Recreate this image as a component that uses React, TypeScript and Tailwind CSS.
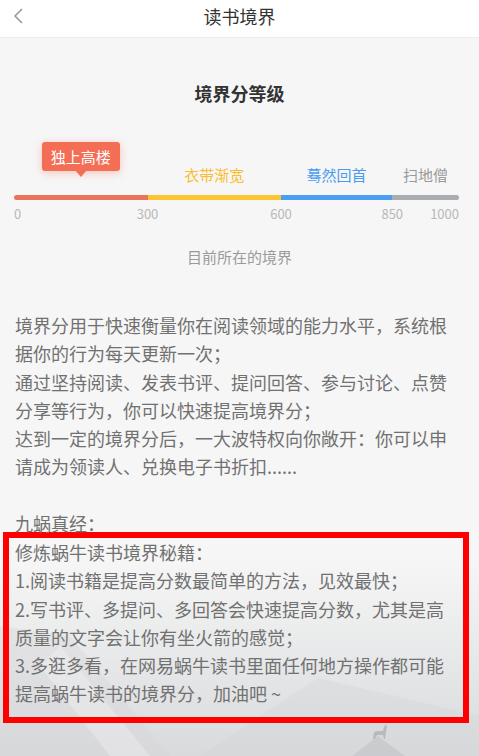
import React from "react";

const font = { fontFamily: '"Noto Sans CJK SC", "Noto Sans", sans-serif' };

export default function App() {
  return (
    <div
      className="relative h-[756px] w-[479px] overflow-hidden bg-[linear-gradient(to_bottom,#f6f6f6_0%,#f6f6f6_74%,#e6e7e8_88%,#d9dadc_100%)]"
      style={font}
    >
      {/* background mountains */}
      <svg
        className="absolute bottom-0 left-0"
        width="479"
        height="190"
        viewBox="0 0 479 190"
      >
        <polygon points="0,60 70,70 170,190 0,190" fill="#d4d5d8" opacity="0.35" />
        <polygon points="60,80 150,190 110,190 40,100" fill="#ffffff" opacity="0.25" />
        <polygon points="200,190 318,112 479,150 479,190" fill="#d2d3d6" opacity="0.35" />
        <polygon points="352,190 378,170 405,190" fill="#c7c8cb" opacity="0.8" />
        {/* goat */}
        <path
          d="M373,173 L374,166 L377,165 L383,165 L384,161 L386,158 L387,161 L386,166 L385,173 L384,173 L383,169 L377,169 L375,173 Z"
          fill="#b9babd"
        />
      </svg>

      <div className="relative">
        {/* header */}
        <div className="relative flex h-[38px] justify-center border-b border-[#ececec] bg-white pt-[5px]">
          <svg
            className="absolute left-[12px] top-[7px]"
            width="14"
            height="18"
            viewBox="0 0 14 18"
          >
            <polyline
              points="10,2 3,9 10,16"
              fill="none"
              stroke="#9a9a9a"
              strokeWidth="1.6"
            />
          </svg>
          <span className="text-[18px] leading-[22px] text-[#333]">读书境界</span>
        </div>

        {/* title */}
        <div className="mt-[43px] text-center text-[18px] font-bold leading-[24px] text-[#333]">
          境界分等级
        </div>

        {/* level bar */}
        <div className="mx-[14px] mt-[60px] w-[445px]">
          <div className="flex">
            <div className="relative flex flex-[300] flex-col">
              <div className="h-[20px]" />
              <div className="absolute left-1/2 top-[-23px] -translate-x-1/2">
                <div className="relative rounded-[3px] bg-[#f46d55] px-[9px] text-[15px] leading-[29px] whitespace-nowrap text-white shadow-[0_2px_8px_rgba(244,109,85,0.35)]">
                  独上高楼
                  <div className="absolute left-1/2 top-[28px] h-0 w-0 -translate-x-1/2 border-x-[6px] border-t-[7px] border-x-transparent border-t-[#f46d55]" />
                </div>
              </div>
              <div className="mt-[10px] h-[5px] rounded-l-full bg-[#e9745e]" />
            </div>
            <div className="flex flex-[300] flex-col">
              <div className="text-center text-[15px] leading-[20px] text-[#fbbd2f]">衣带渐宽</div>
              <div className="mt-[10px] h-[5px] bg-[#fdc535]" />
            </div>
            <div className="flex flex-[250] flex-col">
              <div className="text-center text-[15px] leading-[20px] text-[#4a9bf0]">蓦然回首</div>
              <div className="mt-[10px] h-[5px] bg-[#4c9ef2]" />
            </div>
            <div className="flex flex-[150] flex-col">
              <div className="text-center text-[15px] leading-[20px] whitespace-nowrap text-[#9a9a9a]">扫地僧</div>
              <div className="mt-[10px] h-[5px] rounded-r-full bg-[#a9acb0]" />
            </div>
          </div>
          <div className="relative mt-[6px] h-[16px] text-[13px] leading-[16px] text-[#b8b8b8]">
            <span className="absolute left-0">0</span>
            <span className="absolute left-[30%] -translate-x-1/2">300</span>
            <span className="absolute left-[60%] -translate-x-1/2">600</span>
            <span className="absolute left-[85%] -translate-x-1/2">850</span>
            <span className="absolute right-0">1000</span>
          </div>
        </div>

        <div className="mt-[25px] text-center text-[15px] leading-[20px] text-[#9a9a9a]">
          目前所在的境界
        </div>

        {/* description */}
        <div className="mt-[44px] pl-[15px] pr-[16px] text-[18px] leading-[28.25px] text-[#717171]">
          <div className="whitespace-nowrap">境界分用于快速衡量你在阅读领域的能力水平，系统根</div>
          <div className="whitespace-nowrap">据你的行为每天更新一次；</div>
          <div className="whitespace-nowrap">通过坚持阅读、发表书评、提问回答、参与讨论、点赞</div>
          <div className="whitespace-nowrap">分享等行为，你可以快速提高境界分；</div>
          <div className="whitespace-nowrap">达到一定的境界分后，一大波特权向你敞开：你可以申</div>
          <div className="whitespace-nowrap">请成为领读人、兑换电子书折扣......</div>
          <div className="h-[28.25px]" />
          <div className="whitespace-nowrap">九蜗真经：</div>
          <div className="ml-[-12px] mt-[-5px] w-[466px] border-[6px] border-[#ff0000] pb-[9px] pl-[6px]">
            <div className="whitespace-nowrap">修炼蜗牛读书境界秘籍：</div>
            <div className="whitespace-nowrap">1.阅读书籍是提高分数最简单的方法，见效最快；</div>
            <div className="whitespace-nowrap">2.写书评、多提问、多回答会快速提高分数，尤其是高</div>
            <div className="whitespace-nowrap">质量的文字会让你有坐火箭的感觉；</div>
            <div className="whitespace-nowrap">3.多逛多看，在网易蜗牛读书里面任何地方操作都可能</div>
            <div className="whitespace-nowrap">提高蜗牛读书的境界分，加油吧 ~</div>
          </div>
        </div>
      </div>
    </div>
  );
}
